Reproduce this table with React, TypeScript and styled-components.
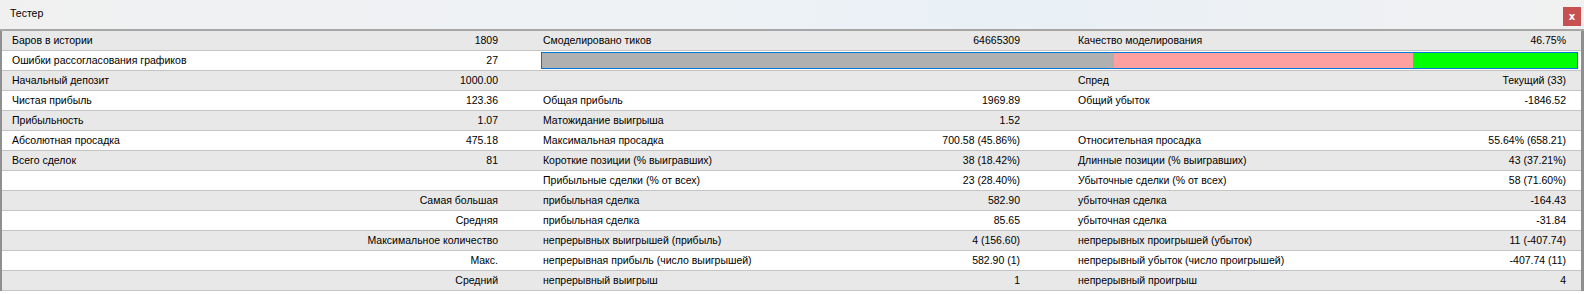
import React from 'react';
import styled, { createGlobalStyle } from 'styled-components';

const GlobalStyle = createGlobalStyle`
  html, body {
    margin: 0;
    padding: 0;
    background: #fff;
  }
  body {
    font-family: "Liberation Sans", Arial, sans-serif;
    font-size: 10.5px;
    color: #000;
  }
`;

const Window = styled.div`
  width: 1584px;
  height: 294px;
  display: flex;
  flex-direction: column;
  background: #fff;
  overflow: hidden;
`;

const TitleBar = styled.div`
  height: 29px;
  display: flex;
  align-items: center;
  justify-content: space-between;
  padding: 0 3px 0 10px;
  background: linear-gradient(to right, #f0f0f0 0%, #eef2f5 40%, #e9f0f6 65%, #f1f1f1 100%);
  border-bottom: 2px solid #a6a6a6;
`;

const Title = styled.span`
  font-size: 10.5px;
  color: #000;
  margin-top: -3px;
`;

const CloseButton = styled.button`
  width: 18px;
  height: 19px;
  margin-top: 3px;
  border: none;
  padding: 0;
  background: #c75050;
  color: #fff;
  font-family: "DejaVu Sans", sans-serif;
  font-size: 10px;
  font-weight: bold;
  line-height: 17px;
  cursor: pointer;
`;

const Table = styled.div`
  border-left: 2px solid #8f8f8f;
  border-right: 3px solid #8f8f8f;
`;

const Row = styled.div<{ $alt: boolean }>`
  display: grid;
  grid-template-columns: 10px 486px 43px 479px 56px 490px 15px;
  height: 19px;
  border-bottom: 1px solid #c4c4c4;
  background: ${(p) => (p.$alt ? '#e8e8e8' : '#fff')};
  align-items: center;
`;

const Pair = styled.div<{ $col: number; $right?: boolean }>`
  grid-column: ${(p) => p.$col};
  display: flex;
  justify-content: ${(p) => (p.$right ? 'flex-end' : 'space-between')};
  padding-left: ${(p) => (p.$col === 2 ? 0 : 2)}px;
  white-space: nowrap;
  line-height: 19px;
`;

const Bar = styled.div`
  grid-column: 4 / 8;
  margin-right: 3px;
  height: 15px;
  border: 1px solid #0078d7;
  display: flex;
  align-self: center;
`;

const Segment = styled.div<{ $color: string }>`
  background: ${(p) => p.$color};
  height: 100%;
`;

type Cell = [string, string] | null;

interface RowData {
  cells: Cell[];
  rightLabel?: boolean;
  bar?: boolean;
}

const rows: RowData[] = [
  { cells: [['Баров в истории', '1809'], ['Смоделировано тиков', '64665309'], ['Качество моделирования', '46.75%']] },
  { cells: [['Ошибки рассогласования графиков', '27']], bar: true },
  { cells: [['Начальный депозит', '1000.00'], null, ['Спред', 'Текущий (33)']] },
  { cells: [['Чистая прибыль', '123.36'], ['Общая прибыль', '1969.89'], ['Общий убыток', '-1846.52']] },
  { cells: [['Прибыльность', '1.07'], ['Матожидание выигрыша', '1.52'], null] },
  { cells: [['Абсолютная просадка', '475.18'], ['Максимальная просадка', '700.58 (45.86%)'], ['Относительная просадка', '55.64% (658.21)']] },
  { cells: [['Всего сделок', '81'], ['Короткие позиции (% выигравших)', '38 (18.42%)'], ['Длинные позиции (% выигравших)', '43 (37.21%)']] },
  { cells: [null, ['Прибыльные сделки (% от всех)', '23 (28.40%)'], ['Убыточные сделки (% от всех)', '58 (71.60%)']] },
  { cells: [['Самая большая', ''], ['прибыльная сделка', '582.90'], ['убыточная сделка', '-164.43']], rightLabel: true },
  { cells: [['Средняя', ''], ['прибыльная сделка', '85.65'], ['убыточная сделка', '-31.84']], rightLabel: true },
  { cells: [['Максимальное количество', ''], ['непрерывных выигрышей (прибыль)', '4 (156.60)'], ['непрерывных проигрышей (убыток)', '11 (-407.74)']], rightLabel: true },
  { cells: [['Макс.', ''], ['непрерывная прибыль (число выигрышей)', '582.90 (1)'], ['непрерывный убыток (число проигрышей)', '-407.74 (11)']], rightLabel: true },
  { cells: [['Средний', ''], ['непрерывный выигрыш', '1'], ['непрерывный проигрыш', '4']], rightLabel: true },
];

const columns = [2, 4, 6];

export default function App() {
  return (
    <>
      <GlobalStyle />
      <Window>
        <TitleBar>
          <Title>Тестер</Title>
          <CloseButton>x</CloseButton>
        </TitleBar>
        <Table>
          {rows.map((row, i) => (
            <Row key={i} $alt={i % 2 === 0}>
              {row.cells.map((cell, j) =>
                cell ? (
                  <Pair key={j} $col={columns[j]} $right={j === 0 && row.rightLabel}>
                    <span>{cell[0]}</span>
                    {cell[1] && <span>{cell[1]}</span>}
                  </Pair>
                ) : null
              )}
              {row.bar && (
                <Bar>
                  <Segment $color="#b0b0b0" style={{ width: '55.3%' }} />
                  <Segment $color="#ffa0a0" style={{ width: '28.9%' }} />
                  <Segment $color="#00ff00" style={{ flex: 1 }} />
                </Bar>
              )}
            </Row>
          ))}
        </Table>
      </Window>
    </>
  );
}
